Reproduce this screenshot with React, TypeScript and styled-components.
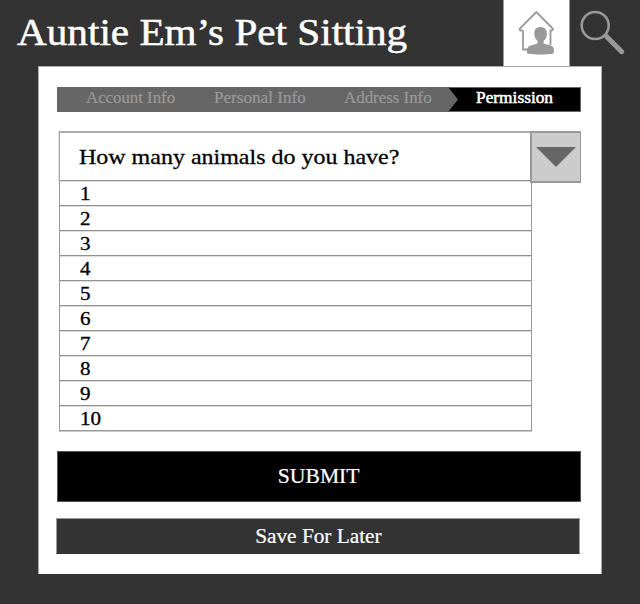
import React from "react";
import styled, { createGlobalStyle } from "styled-components";

const GlobalStyle = createGlobalStyle`
  * { box-sizing: border-box; }
  body {
    margin: 0;
    background: #333;
    font-family: "Liberation Serif", "Times New Roman", serif;
  }
`;

const Page = styled.div`
  width: 640px;
  height: 604px;
  overflow: hidden;
  background: #333;
`;

const Header = styled.header`
  display: flex;
  height: 66px;
  padding-left: 17px;
`;

const Text = styled.span<{ $size: number; $stretch?: number; $weight?: number; $origin?: string }>`
  display: inline-block;
  white-space: nowrap;
  font-size: ${(p) => p.$size}px;
  transform: scaleX(${(p) => p.$stretch ?? 1});
  transform-origin: ${(p) => p.$origin ?? "left"} center;
  -webkit-text-stroke: ${(p) => p.$weight ?? 0.2}px currentColor;
`;

const Title = styled.h1`
  width: 486px;
  margin: 0;
  color: #fff;
  font-weight: 400;
  line-height: 65px;
`;

const HomeTab = styled.a`
  display: block;
  width: 67px;
  height: 66px;
  background: #fff;
  border: solid #999;
  border-width: 0 1px;
`;

const SearchLink = styled.a`
  display: block;
  width: 70px;
  height: 66px;
`;

const Panel = styled.main`
  width: 564px;
  height: 508px;
  margin-left: 38px;
  padding: 20px 0 0 17px;
  background: #fff;
  border: solid #aaa;
  border-width: 1px 1px 0;
`;

const Steps = styled.nav`
  display: flex;
  width: 524px;
  height: 25px;
  margin-left: 1px;
  background: #666;
  color: #999;
  line-height: 22px;
`;

const Step = styled.div<{ $width: number; $inset: number }>`
  width: ${(p) => p.$width}px;
  padding-left: ${(p) => p.$inset}px;
`;

const CurrentStep = styled(Step)`
  color: #fff;
  background: #000;
  border: solid #666;
  border-width: 1px 1px 1px 0;
  line-height: 20px;
  clip-path: polygon(0 0, 100% 0, 100% 100%, 0 100%, 10px 50%);
`;

const Select = styled.div`
  display: flex;
  width: 524px;
  margin: 19px 0 0 2px;
`;

const Question = styled.div`
  width: 471px;
  height: 51px;
  margin-left: 1px;
  padding-left: 19px;
  line-height: 48px;
  border: solid #aaa;
  border-width: 2px 0 0 1px;
  box-shadow: -1px 0 #ddd;
`;

const Toggle = styled.button`
  width: 51px;
  height: 52px;
  margin: 0;
  padding: 0;
  background: #ccc;
  border: solid #999;
  border-width: 2px 1px 2px 2px;
  svg { display: block; }
`;

const Options = styled.ul`
  width: 473px;
  margin: -3px 0 0 3px;
  padding: 0;
  list-style: none;
  border: solid #999;
  border-width: 0 1px 1px;
  box-shadow: 0 1px #ccc;
`;

const Option = styled.li`
  height: 25px;
  padding-left: 20px;
  line-height: 26px;
  border-top: 1px solid #919191;
  box-shadow: inset 0 1px #ddd;
`;

const Submit = styled.button`
  display: block;
  width: 524px;
  height: 51px;
  margin: 20px 0 0 1px;
  padding: 0;
  font-family: inherit;
  color: #fff;
  background: #000;
  border: 1px solid #555;
`;

const Save = styled(Submit)`
  height: 36px;
  margin: 16px 0 0;
  background: #333;
  border-color: #999 #999 #333;
`;

const steps = [
  { name: "Account Info", width: 128, inset: 29, stretch: 1.05 },
  { name: "Personal Info", width: 130, inset: 29, stretch: 1.07 },
  { name: "Address Info", width: 133, inset: 29, stretch: 1.055 },
];

export default function App() {
  return (
    <Page>
      <GlobalStyle />
      <Header>
        <Title><Text $size={38} $stretch={1.084} $weight={0.5}>Auntie Em’s Pet Sitting</Text></Title>
        <HomeTab aria-label="Home">
          <svg width="65" height="66" viewBox="504 0 65 66">
            <path d="M523 30.5h-2.3q-2.4-1 0-2.8L536.3 12l15.6 15.7q2.4 1.8 0 2.8h-1.4V45M523 30.5v19h5" fill="none" stroke="#999" strokeWidth="1.8" />
            <path d="M540.4 27c-4.3 0-6.4 2.8-6 7.2.2 3 1.4 5.4 3.2 6.8v2.2c-2.4 1.8-6.6 1.3-9 3.3-1.9 1.8-2.4 6-1 7 2.6 1.3 22.9 1.3 25.6 0 1.4-1.2 1-5.2-.6-7-2.1-2-6.6-1.5-9-3.3v-2.2c1.9-1.4 3-3.8 3.2-6.8.4-4.4-2.1-7.2-6.4-7.2Z" fill="#999" />
          </svg>
        </HomeTab>
        <SearchLink aria-label="Search">
          <svg width="70" height="66" viewBox="570 0 70 66" fill="none" stroke="#999">
            <circle cx="595.2" cy="25.5" r="13.5" strokeWidth="2.6" />
            <path d="M605 35l2 2" strokeWidth="3" />
            <path d="M606.5 36.5L621.7 51.7" strokeWidth="5" strokeLinecap="round" />
          </svg>
        </SearchLink>
      </Header>
      <Panel>
        <Steps>
          {steps.map((s) => (
            <Step key={s.name} $width={s.width} $inset={s.inset}>
              <Text $size={16} $stretch={s.stretch}>{s.name}</Text>
            </Step>
          ))}
          <CurrentStep $width={133} $inset={28}>
            <Text $size={16} $stretch={1.083} $weight={0.5}>Permission</Text>
          </CurrentStep>
        </Steps>
        <Select>
          <Question><Text $size={22} $stretch={1.09} $weight={0.3}>How many animals do you have?</Text></Question>
          <Toggle aria-label="Show options">
            <svg width="48" height="48" viewBox="532 133 48 48">
              <path d="M536 147h40l-20 20Z" fill="#666" />
            </svg>
          </Toggle>
        </Select>
        <Options>
          {Array.from({ length: 10 }, (_, i) => (
            <Option key={i}><Text $size={18} $stretch={1.17} $weight={0.3}>{i + 1}</Text></Option>
          ))}
        </Options>
        <Submit><Text $size={21} $stretch={1.03} $origin="center">SUBMIT</Text></Submit>
        <Save><Text $size={20} $stretch={1.064} $origin="center">Save For Later</Text></Save>
      </Panel>
    </Page>
  );
}
